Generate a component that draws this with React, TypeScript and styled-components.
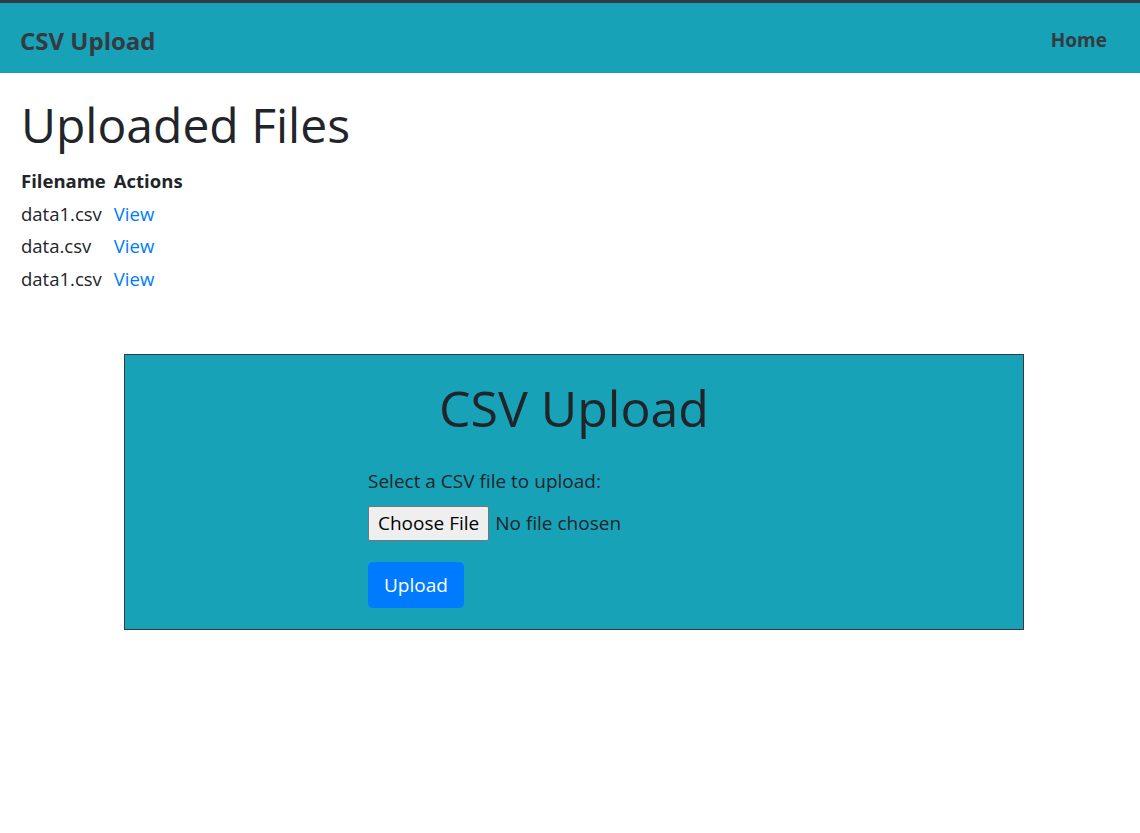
import React from "react";
import styled, { createGlobalStyle } from "styled-components";

const Global = createGlobalStyle`
  html, body { margin: 0; padding: 0; background: #fff; }
  body {
    font-family: "Open Sans", "Noto Sans", Arial, sans-serif;
    color: #212529;
    font-size: 18px;
  }
`;

const Navbar = styled.nav`
  box-sizing: border-box;
  height: 73px;
  border-top: 3px solid #343a40;
  background: #17a2b8;
  display: flex;
  align-items: center;
  justify-content: space-between;
  padding: 4px 33px 0 20px;
`;

const Brand = styled.a`
  font-size: 24px;
  font-weight: 700;
  color: #343a40;
  text-decoration: none;
`;

const NavLink = styled.a`
  font-size: 19px;
  font-weight: 700;
  color: #343a40;
  text-decoration: none;
`;

const Main = styled.main`
  padding: 0 21px;
`;

const Title = styled.h1`
  font-size: 48px;
  font-weight: 500;
  margin: 23px 0 11px;
  line-height: 1.2;
`;

const Table = styled.table`
  border-collapse: collapse;
  margin-left: -1px;
  th, td {
    text-align: left;
    padding: 0 7px 0 1px;
    height: 32.5px;
    font-size: 18.5px;
  }
  th { font-weight: 700; }
`;

const ViewLink = styled.a`
  color: #007bff;
  text-decoration: none;
`;

const Card = styled.section`
  width: 898px;
  margin: 59px 0 0 103px;
  border: 1px solid #343a40;
  background: #17a2b8;
  padding: 23px 0 21px;
`;

const CardTitle = styled.h1`
  font-size: 50px;
  font-weight: 500;
  margin: 0 0 29px;
  text-align: center;
  line-height: 60px;
`;

const Form = styled.form`
  width: 412px;
  margin: 0 auto;
`;

const Label = styled.label`
  display: block;
  font-size: 19px;
  line-height: 28px;
  margin-bottom: 11px;
`;

const FileRow = styled.div`
  display: flex;
  align-items: center;
  gap: 6px;
  margin-bottom: 21px;
`;

const FileButton = styled.span`
  display: inline-flex;
  align-items: center;
  height: 35px;
  box-sizing: border-box;
  padding: 0 9px;
  background: #efefef;
  border: 1px solid #767676;
  border-radius: 2px;
  font-size: 19px;
  color: #000;
`;

const FileText = styled.span`
  font-size: 19px;
`;

const UploadButton = styled.button`
  display: block;
  height: 46px;
  padding: 0 16px;
  border: none;
  border-radius: 5px;
  background: #007bff;
  color: #fff;
  font-family: inherit;
  font-size: 19px;
`;

const files = ["data1.csv", "data.csv", "data1.csv"];

export default function App() {
  return (
    <>
      <Global />
      <Navbar>
        <Brand href="#">CSV Upload</Brand>
        <NavLink href="#">Home</NavLink>
      </Navbar>
      <Main>
        <Title>Uploaded Files</Title>
        <Table>
          <thead>
            <tr>
              <th>Filename</th>
              <th>Actions</th>
            </tr>
          </thead>
          <tbody>
            {files.map((f, i) => (
              <tr key={i}>
                <td>{f}</td>
                <td>
                  <ViewLink href="#">View</ViewLink>
                </td>
              </tr>
            ))}
          </tbody>
        </Table>
        <Card>
          <CardTitle>CSV Upload</CardTitle>
          <Form onSubmit={(e) => e.preventDefault()}>
            <Label>Select a CSV file to upload:</Label>
            <FileRow>
              <FileButton>Choose File</FileButton>
              <FileText>No file chosen</FileText>
            </FileRow>
            <UploadButton type="submit">Upload</UploadButton>
          </Form>
        </Card>
      </Main>
    </>
  );
}
